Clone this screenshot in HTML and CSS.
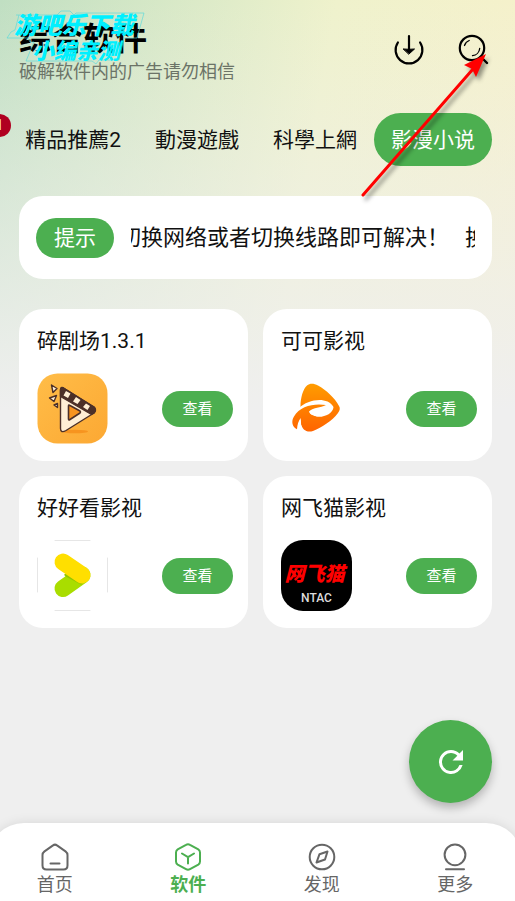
FILE: index.html
```html
<!DOCTYPE html>
<html lang="zh-CN">
<head>
<meta charset="utf-8">
<meta name="viewport" content="width=device-width, initial-scale=1">
<title>综合软件</title>
<link rel="stylesheet" href="styles.css">
</head>
<body>
<header class="header">
  <div class="heading">
    <h1 class="title">综合软件</h1>
    <p class="subtitle">破解软件内的广告请勿相信</p>
    <div class="watermark">
      <svg class="watermark-frame" viewBox="0 0 144 58" fill="none" stroke="#4fd9dc" stroke-width="1" stroke-opacity=".6" aria-hidden="true">
        <path d="M10 5H51L55 1H64L68 5L70 3H138L131 28H118L113 50H93L90 54L86 51H20L28 32H24L22 28H1L5 22L9 20L13 5"/>
      </svg>
      <span class="mark-top">游吧乐下载</span>
      <span class="mark-bottom">小编亲测</span>
    </div>
  </div>
  <div class="actions">
    <button class="icon-button" aria-label="下载">
      <svg viewBox="0 0 32 32" fill="none" stroke="#000" stroke-width="2.2" stroke-linecap="round" aria-hidden="true">
        <path d="M4.900 9.500A13.400 13.400 0 1 0 27.100 9.500M16 3V17"/>
        <path d="M10.500 16Q16 16.600 21.500 16L16 21Z" fill="#000" stroke-width="1" stroke-linejoin="round"/>
      </svg>
    </button>
    <button class="icon-button" aria-label="搜索">
      <svg viewBox="0 0 32 32" fill="none" stroke="#000" stroke-linecap="round" aria-hidden="true">
        <circle cx="15" cy="15" r="12.200" stroke-width="2.2"/>
        <path d="M24.500 24.500L30 30" stroke-width="2.4"/>
        <path d="M7.500 12.500A8 8 0 0 1 12.200 7.500M22.700 15.500A8 8 0 0 1 15.500 22.700" stroke-width="1.3"/>
      </svg>
    </button>
  </div>
</header>

<div class="tabs">
  <span class="badge">1</span>
  <button class="tab">精品推薦2</button>
  <button class="tab">動漫遊戲</button>
  <button class="tab">科學上網</button>
  <button class="tab active">影漫小说</button>
</div>

<main class="content">
  <section class="notice">
    <span class="notice-label">提示</span>
    <div class="marquee"><p class="marquee-track"><span>切换网络或者切换线路即可解决！</span><span>换</span></p></div>
  </section>

  <section class="apps">
    <article class="card">
      <h2 class="card-title">碎剧场1.3.1</h2>
      <div class="card-row">
        <svg class="app-icon" viewBox="0 0 71 71" aria-hidden="true">
          <defs><linearGradient id="amber" x1="0" y1="0" x2="1" y2="1"><stop offset="0" stop-color="#ffbd48"/><stop offset="1" stop-color="#fca833"/></linearGradient></defs>
          <rect x=".5" y=".5" width="70" height="70" rx="20" fill="url(#amber)"/>
          <ellipse cx="38" cy="58.500" rx="13" ry="1.700" fill="#f7941f"/>
          <g stroke="#4c3028" stroke-width="1.400" stroke-linejoin="round">
            <path d="M23.500 17Q23.500 13.500 26.500 15L57 34Q60 37 57 40L29 57.500Q23.500 60.500 23.500 55.500Z" fill="#ffefd5"/>
            <path d="M23.500 17Q23.500 13.500 26.500 15L57 34Q59.500 36.500 57 40L54.500 41.500L23.500 23.500Z" fill="#4c3028"/>
            <path d="M31.500 33Q31.500 31.500 33 32.500L43 38Q44 39 43 40L33 46.500Q31.500 47.500 31.500 46Z" fill="#f79420" stroke-width="1.600"/>
            <path d="M14.500 12L20 15.500L16 19.500ZM12.500 25L19.500 22.500L17 28.500ZM17 32L20.500 30.500V34.500Z" fill="#ffefd5"/>
          </g>
          <path d="M29 18L33.500 20.500L31 25L26.500 22.500ZM39 24L43.500 27L40.500 31L36 28.500ZM49 30.500L53 33L50.500 37L46 34Z" fill="#ffefd5"/>
        </svg>
        <button class="view">查看</button>
      </div>
    </article>

    <article class="card">
      <h2 class="card-title">可可影视</h2>
      <div class="card-row">
        <svg class="app-icon" viewBox="0 0 71 71" aria-hidden="true">
          <defs><linearGradient id="flame" gradientUnits="userSpaceOnUse" x1="0" y1="10" x2="0" y2="59"><stop offset="0" stop-color="#ff9d00"/><stop offset="1" stop-color="#ff6400"/></linearGradient></defs>
          <path d="M19.500 33C19.500 25 22 16 26 12.500C29 10 33 10.500 37 12.500C45 17 54 25 58 33Q60 36 57 40C51 48 41 54 32 58C26 60 21 57 20 50Z" fill="url(#flame)"/>
          <path d="M18 35C27 26.500 46 23 52.500 34C52 41 42 45 35 43.500C31 42.500 28 40.500 28 38.500L26 48L19 44Z" fill="#fff"/>
          <path d="M45 32C39 35 33 34 28 38.500C28 41 31 43 35 43.500L34 52H20.500L19.700 45Q16.500 49 16 56.300C11 54 10 48 13 43.500C19 33 33 30 45 32Z" fill="url(#flame)"/>
        </svg>
        <button class="view">查看</button>
      </div>
    </article>

    <article class="card">
      <h2 class="card-title">好好看影视</h2>
      <div class="card-row">
        <svg class="app-icon" viewBox="0 0 71 71" fill="none" stroke-linecap="round" aria-hidden="true">
          <path d="M18 .5H53M18 70.500H53M.5 18V52M70.500 18V52" stroke="#e6e6e6"/>
          <path d="M26 48.500L45 35" stroke="#a9dd00" stroke-width="17"/>
          <path d="M29 35L44 43" stroke="#91c600" stroke-width="3"/>
          <path d="M26 22L45 35" stroke="#ffdf00" stroke-width="17"/>
        </svg>
        <button class="view">查看</button>
      </div>
    </article>

    <article class="card">
      <h2 class="card-title">网飞猫影视</h2>
      <div class="card-row">
        <div class="app-icon cat-icon"><strong class="cat-name">网飞猫</strong><span class="cat-tag">NTAC</span></div>
        <button class="view">查看</button>
      </div>
    </article>
  </section>
</main>

<button class="refresh" aria-label="刷新">
  <svg viewBox="0 0 24 24" fill="#fff" aria-hidden="true"><path d="M17.650 6.350A7.960 7.960 0 0 0 12 4a8 8 0 1 0 7.730 10h-2.080A6 6 0 1 1 12 6c1.660 0 3.140.69 4.220 1.780L13 11h7V4z"/></svg>
</button>

<nav class="nav">
  <a class="nav-item" href="#home">
    <svg viewBox="0 0 28 28" aria-hidden="true"><path d="M12 2.400Q14 .8 16 2.400L24.500 8.400Q26.500 10 26.500 12V22.500Q26.500 26.500 22.500 26.500H5.500Q1.500 26.500 1.500 22.500V12Q1.500 10 3.500 8.400ZM9.500 20.500H18.500"/></svg>
    <span>首页</span>
  </a>
  <a class="nav-item current" href="#apps">
    <svg viewBox="0 0 28 28" aria-hidden="true"><path d="M12 1.800Q14 .6 16 1.800L24.300 6.400Q26 7.500 26 9.500V18.500Q26 20.500 24.300 21.600L16 26.200Q14 27.400 12 26.200L3.700 21.600Q2 20.500 2 18.500V9.500Q2 7.500 3.700 6.400ZM8 10.500L14 14.200L20 10.500M14 14.200V20.500"/></svg>
    <span>软件</span>
  </a>
  <a class="nav-item" href="#discover">
    <svg viewBox="0 0 28 28" aria-hidden="true"><circle cx="14" cy="14" r="12.300"/><path d="M19.500 8.500L17 16.500L8.500 19.500L11.500 11.200Z"/></svg>
    <span>发现</span>
  </a>
  <a class="nav-item" href="#more">
    <svg viewBox="0 0 28 28" aria-hidden="true"><circle cx="14" cy="11.800" r="10.400"/><path d="M5 26.300H23"/></svg>
    <span>更多</span>
  </a>
</nav>

<svg class="pointer" viewBox="0 0 135 155" aria-hidden="true">
  <path d="M2 145L112 19" stroke="#f00" stroke-width="3" stroke-linecap="round"/>
  <path d="M125 4L103 15L111 19L115 27Z" fill="#f00"/>
</svg>
</body>
</html>
```
FILE: styles.css
```css
* {
  box-sizing: border-box;
}

body {
  position: relative;
  display: flex;
  flex-direction: column;
  min-height: 100vh;
  margin: 0;
  overflow-x: hidden;
  color: #111;
  font-family: Roboto, "Noto Sans CJK SC", sans-serif;
  background:
    linear-gradient(to bottom, rgba(239, 239, 239, 0), #efefef 410px),
    linear-gradient(100deg, #c0dfc2 0%, #eff2cc 50%, #faf0ca 100%);
}

h1,
h2,
p {
  margin: 0;
}

button {
  padding: 0;
  border: 0;
  background: none;
  color: inherit;
  font: inherit;
}

.header {
  display: flex;
  justify-content: space-between;
  padding: 18px 26px 0 19px;
}

.heading {
  position: relative;
}

.title {
  color: #000;
  font-size: 32px;
  line-height: 42px;
}

.subtitle {
  color: #6b7367;
  font-size: 18px;
  line-height: 24px;
}

.watermark {
  position: absolute;
  top: -8px;
  left: -13px;
  width: 144px;
  color: #00f0ff;
  font-style: italic;
  font-weight: 900;
}

.watermark-frame {
  position: absolute;
  inset: 0;
}

.mark-top,
.mark-bottom {
  position: relative;
  display: block;
  white-space: nowrap;
}

.mark-top {
  margin-left: 8px;
  font-size: 24px;
  line-height: 32px;
}

.mark-bottom {
  margin-left: 26px;
  font-size: 22px;
  line-height: 20px;
}

.actions {
  display: flex;
  gap: 32px;
  padding-top: 15px;
}

.icon-button,
.icon-button svg {
  display: block;
  width: 32px;
  height: 32px;
}

.tabs {
  position: relative;
  display: flex;
  justify-content: flex-end;
  margin-top: 29px;
  padding-right: 23px;
}

.tab {
  padding: 13px 17px 11px;
  border-radius: 28px;
  font-size: 21px;
  line-height: 29px;
  white-space: nowrap;
}

.tab.active {
  background: #4caf50;
  color: #fff;
}

.badge {
  position: absolute;
  top: 1px;
  left: -12px;
  width: 23px;
  border-radius: 12px;
  background: #b00020;
  color: #fff;
  font-size: 15px;
  line-height: 23px;
  text-align: center;
}

.content {
  margin: 30px 23px 0 19px;
}

.notice {
  display: flex;
  align-items: center;
  gap: 17px;
  padding: 22px 17px 21px;
  border-radius: 24px;
  background: #fff;
}

.notice-label {
  padding: 0 18px;
  border-radius: 20px;
  background: #4caf50;
  color: #fff;
  font-size: 21px;
  line-height: 40px;
  white-space: nowrap;
}

.marquee {
  flex: 1;
  min-width: 0;
  overflow: hidden;
}

.marquee-track {
  display: flex;
  gap: 16px;
  margin-left: -12px;
  font-size: 22px;
  line-height: 40px;
  white-space: nowrap;
}

.apps {
  display: grid;
  grid-template-columns: 1fr 1fr;
  gap: 15px;
  margin-top: 30px;
}

.card {
  padding: 18px 15px 17px 18px;
  border-radius: 24px;
  background: #fff;
}

.card-title {
  font-size: 21px;
  font-weight: 400;
  line-height: 28px;
}

.card-row {
  display: flex;
  align-items: center;
  justify-content: space-between;
  margin-top: 18px;
}

.app-icon {
  display: block;
  width: 71px;
  height: 71px;
}

.cat-icon {
  display: flex;
  flex-direction: column;
  align-items: center;
  padding-top: 20px;
  border-radius: 22px;
  background: #000;
}

.cat-name {
  padding-right: 4px;
  color: #f00;
  font-size: 20px;
  font-style: italic;
  font-weight: 900;
  line-height: 28px;
}

.cat-tag {
  color: #ddd;
  font-size: 12px;
  font-weight: 500;
  line-height: 20px;
}

.view {
  width: 71px;
  border-radius: 18px;
  background: #4caf50;
  color: #fff;
  font-size: 15px;
  line-height: 36px;
}

.refresh {
  position: absolute;
  right: 23px;
  bottom: 98px;
  display: grid;
  place-items: center;
  width: 83px;
  height: 83px;
  border-radius: 50%;
  background: #4caf50;
  box-shadow: 0 5px 10px rgba(0, 0, 0, 0.25);
}

.refresh svg {
  width: 36px;
  height: 36px;
}

.nav {
  display: flex;
  margin: auto -7px 0 -12px;
  padding: 20px 0 4px;
  border-radius: 36px 36px 0 0;
  background: #fff;
  box-shadow: 0 0 12px rgba(0, 0, 0, 0.1);
}

.nav-item {
  display: flex;
  flex: 1;
  flex-direction: column;
  align-items: center;
  gap: 2px;
  color: #666;
  font-size: 18px;
  line-height: 24px;
  text-decoration: none;
}

.nav-item svg {
  width: 28px;
  height: 28px;
  fill: none;
  stroke: currentColor;
  stroke-width: 2;
  stroke-linecap: round;
  stroke-linejoin: round;
}

.nav-item.current {
  color: #4caf50;
  font-weight: 700;
}

.pointer {
  position: absolute;
  top: 50px;
  right: 19px;
  width: 135px;
  height: 155px;
  filter: drop-shadow(3px 4px 2px rgba(0, 0, 0, 0.4));
  pointer-events: none;
}
```
